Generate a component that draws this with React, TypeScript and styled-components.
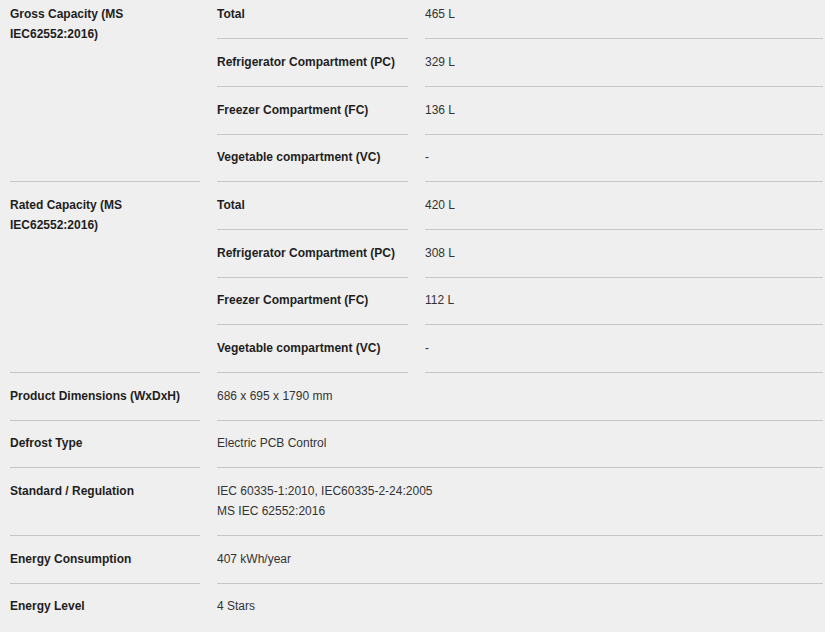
import React from 'react'
import styled, { createGlobalStyle } from 'styled-components'

type SubSpec = { name: string; value: string }
type Spec = { label: string; value?: string[]; items?: SubSpec[] }

const specs: Spec[] = [
	{
		label: 'Gross Capacity (MS IEC62552:2016)',
		items: [
			{ name: 'Total', value: '465 L' },
			{ name: 'Refrigerator Compartment (PC)', value: '329 L' },
			{ name: 'Freezer Compartment (FC)', value: '136 L' },
			{ name: 'Vegetable compartment (VC)', value: '-' }
		]
	},
	{
		label: 'Rated Capacity (MS IEC62552:2016)',
		items: [
			{ name: 'Total', value: '420 L' },
			{ name: 'Refrigerator Compartment (PC)', value: '308 L' },
			{ name: 'Freezer Compartment (FC)', value: '112 L' },
			{ name: 'Vegetable compartment (VC)', value: '-' }
		]
	},
	{ label: 'Product Dimensions (WxDxH)', value: ['686 x 695 x 1790 mm'] },
	{ label: 'Defrost Type', value: ['Electric PCB Control'] },
	{
		label: 'Standard / Regulation',
		value: ['IEC 60335-1:2010, IEC60335-2-24:2005', 'MS IEC 62552:2016']
	},
	{ label: 'Energy Consumption', value: ['407 kWh/year'] },
	{ label: 'Energy Level', value: ['4 Stars'] }
]

const App = () => {
	return (
		<>
			<GlobalStyle />
			<SpecTable>
				{specs.map((spec, i) => {
					const last = i === specs.length - 1
					return (
						<SpecRow key={spec.label}>
							<LabelCell $last={last}>{spec.label}</LabelCell>
							{spec.items ? (
								<SubList>
									{spec.items.map((item) => (
										<SubRow key={item.name}>
											<SubName>{item.name}</SubName>
											<ValueCell>{item.value}</ValueCell>
										</SubRow>
									))}
								</SubList>
							) : (
								<ValueCell $last={last}>
									{spec.value!.map((line) => (
										<div key={line}>{line}</div>
									))}
								</ValueCell>
							)}
						</SpecRow>
					)
				})}
			</SpecTable>
		</>
	)
}

const GlobalStyle = createGlobalStyle`
	html, body {
		margin: 0;
		background: #efefef;
	}
	body {
		font-family: "Liberation Sans", Arial, sans-serif;
		font-size: 12px;
		line-height: 20px;
		color: #222;
	}
`
const SpecTable = styled.div`
	display: flex;
	flex-direction: column;
	padding: 0 2px 0 10px;
	margin-top: -8.4px;
`
const SpecRow = styled.div`
	display: grid;
	grid-template-columns: 190px 1fr;
	column-gap: 17px;
`
const Cell = styled.div<{ $last?: boolean }>`
	padding: 12.6px 0 14.1px;
	border-bottom: 1px solid ${(p) => (p.$last ? 'transparent' : '#c6c6c6')};
`
const LabelCell = styled(Cell)`
	font-weight: bold;
	color: #1e1e1e;
	padding-right: 8px;
`
const SubList = styled.div`
	display: flex;
	flex-direction: column;
`
const SubRow = styled.div`
	display: grid;
	grid-template-columns: 191px 1fr;
	column-gap: 17px;
`
const SubName = styled(Cell)`
	font-weight: bold;
	color: #1e1e1e;
`
const ValueCell = styled(Cell)`
	color: #333;
`

export default App as React.FunctionComponent
